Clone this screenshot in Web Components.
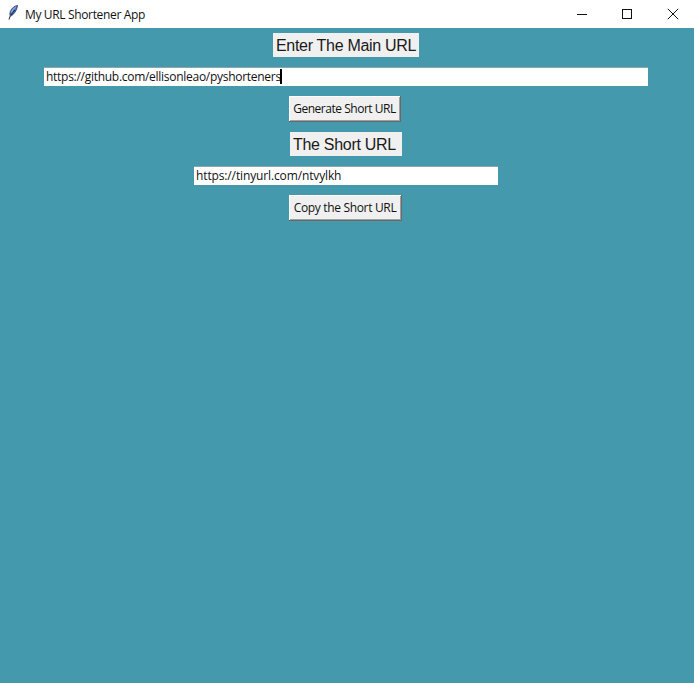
<!DOCTYPE html>
<html>
<head>
<meta charset="utf-8">
<title>My URL Shortener App</title>
<style>
    html, body { margin: 0; height: 100%; overflow: hidden; }
    body { font-family: "Noto Sans", sans-serif; }
</style>
</head>
<body>
<url-app>
    <title-bar>My URL Shortener App</title-bar>
    <tk-label width="146">Enter The Main URL</tk-label>
    <tk-entry width="604" spacing="-.28" value="https://github.com/ellisonleao/pyshorteners" focused></tk-entry>
    <tk-button width="112" shift="2" spacing="-.47">Generate Short URL</tk-button>
    <tk-label width="112">The Short URL</tk-label>
    <tk-entry width="304" spacing="-.13" value="https://tinyurl.com/ntvylkh"></tk-entry>
    <tk-button width="113" shift="1" spacing="-.33">Copy the Short URL</tk-button>
</url-app>

<script>
class UrlApp extends HTMLElement {
    constructor() {
        super();
        this.attachShadow({ mode: 'open' });
        this.shadowRoot.innerHTML = `
            <style>
                :host { display: flex; flex-direction: column; width: 694px; height: 683px; background: #4599ac; overflow: hidden; }
                .content { display: flex; flex-direction: column; align-items: center; gap: 10px; padding: 5px 2px 0 0; }
            </style>
            <slot name="bar"></slot>
            <div class="content"><slot></slot></div>
        `;
    }

    connectedCallback() {
        const bar = this.querySelector('title-bar');
        if (bar) bar.slot = 'bar';
    }
}

class TitleBar extends HTMLElement {
    constructor() {
        super();
        this.attachShadow({ mode: 'open' });
        this.shadowRoot.innerHTML = `
            <style>
                :host { display: flex; align-items: center; height: 28px; background: #fff; color: #111; font: 12px "Open Sans", "Noto Sans", sans-serif; letter-spacing: -.35px; }
                .feather { width: 10px; height: 15px; margin: -4px 0 0 8px; flex: none; }
                .title { margin-left: 7px; flex: 1; }
                .ctl { width: 46px; height: 28px; display: flex; align-items: center; justify-content: center; flex: none; }
                .ctl:last-child { margin-right: -2px; }
                .ctl svg { width: 12px; height: 12px; display: block; }
            </style>
            <svg class="feather" viewBox="0 0 10 15">
                <path d="M9.6.4C6.4.8 3.4 3.2 2.3 6.6c-.6 1.8-.5 3.4-.1 4.6C5.6 10.2 8.8 5.6 9.6.4z" fill="#4f79c4" stroke="#1f2d4c" stroke-width=".7"/>
                <path d="M7.6 2.2C5.6 3.4 4.2 5.2 3.6 7.4" fill="none" stroke="#c9d8f2" stroke-width=".8"/>
                <path d="M6.8 5 3 10M2.2 11 1 14.6" fill="none" stroke="#10131c" stroke-width=".9"/>
            </svg>
            <span class="title"><slot></slot></span>
            <div class="ctl"><svg viewBox="0 0 12 12"><path d="M2 6.5h10" stroke="#111" fill="none"/></svg></div>
            <div class="ctl"><svg viewBox="0 0 12 12"><rect x="1.5" y="1.5" width="9" height="9" stroke="#111" fill="none"/></svg></div>
            <div class="ctl"><svg viewBox="0 0 12 12"><path d="M.8.8l10.4 10.4M11.2.8.8 11.2" stroke="#111" fill="none"/></svg></div>
        `;
    }
}

class TkLabel extends HTMLElement {
    constructor() {
        super();
        this.attachShadow({ mode: 'open' });
        this.shadowRoot.innerHTML = `
            <style>
                :host { display: block; box-sizing: border-box; height: 24px; padding: 0 0 0 3px; background: #f0f0f0; color: #1a1a1a; font: 16px/25px "Liberation Sans", Arial, sans-serif; letter-spacing: -.3px; white-space: nowrap; }
            </style>
            <slot></slot>
        `;
    }

    connectedCallback() {
        this.style.width = `${this.getAttribute('width')}px`;
    }
}

class TkEntry extends HTMLElement {
    constructor() {
        super();
        this.attachShadow({ mode: 'open' });
        this.shadowRoot.innerHTML = `
            <style>
                :host { display: block; box-sizing: border-box; height: 19px; background: #fff; color: #111; padding-left: 2px; border-top: 1px solid #8fa3ab; font: 12px/18px "Open Sans", "Noto Sans", sans-serif; white-space: nowrap; }
                .caret { display: inline-block; width: 2px; height: 15px; margin-left: -1px; background: #000; vertical-align: -3px; }
            </style>
            <span class="val"></span><span class="caret"></span>
        `;
    }

    connectedCallback() {
        this.style.width = `${this.getAttribute('width')}px`;
        this.style.letterSpacing = `${this.getAttribute('spacing')}px`;
        this.shadowRoot.querySelector('.val').textContent = this.getAttribute('value');
        if (!this.hasAttribute('focused')) {
            this.shadowRoot.querySelector('.caret').remove();
        }
    }
}

class TkButton extends HTMLElement {
    constructor() {
        super();
        this.attachShadow({ mode: 'open' });
        this.shadowRoot.innerHTML = `
            <style>
                :host { display: flex; align-items: center; justify-content: center; box-sizing: border-box; height: 26px; padding-bottom: 1px; background: #f0f0f0; color: #111; font: 12px "Open Sans", "Noto Sans", sans-serif; white-space: nowrap; border-right: 1px solid #696969; border-bottom: 1px solid #696969; box-shadow: inset 1px 1px 0 #fff, inset -1px -1px 0 #a0a0a0; }
            </style>
            <slot></slot>
        `;
    }

    connectedCallback() {
        this.style.width = `${this.getAttribute('width')}px`;
        this.style.marginRight = `${this.getAttribute('shift')}px`;
        this.style.letterSpacing = `${this.getAttribute('spacing')}px`;
    }
}

customElements.define('url-app', UrlApp);
customElements.define('title-bar', TitleBar);
customElements.define('tk-label', TkLabel);
customElements.define('tk-entry', TkEntry);
customElements.define('tk-button', TkButton);
</script>
</body>
</html>
